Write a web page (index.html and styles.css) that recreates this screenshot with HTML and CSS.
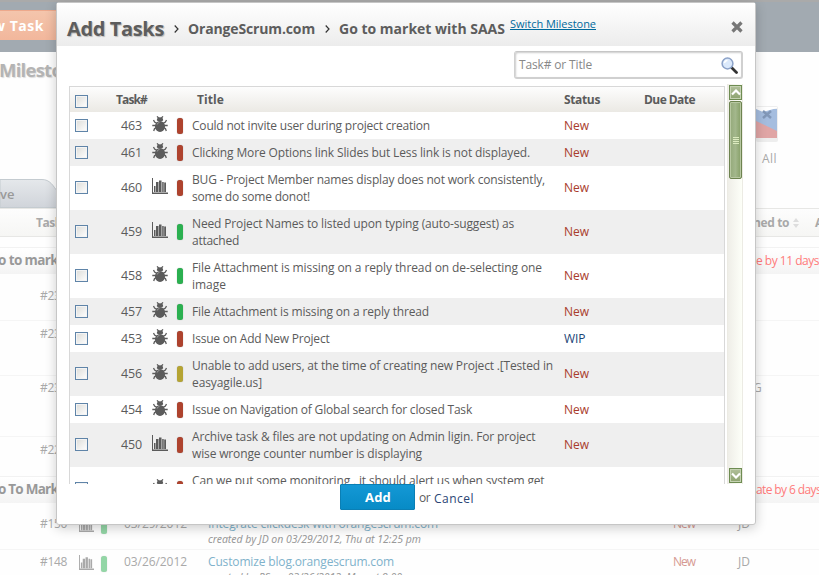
FILE: index.html
```html
<!DOCTYPE html>
<html lang="en">
<head>
<meta charset="utf-8">
<title>Add Tasks</title>
<link rel="stylesheet" href="styles.css">
</head>
<body>
<svg class="defs" width="0" height="0">
  <symbol id="bug" viewBox="0 0 16 16">
    <path d="M4.800 4.300C4.900 2 6.200 1.300 8 1.300s3.100.7 3.200 3L10 5.200H6z"/>
    <path d="M5 .4 6.800 2.200M11 .4 9.200 2.200M1.500 4 2.600 6 5 7.500M14.500 4l-1.100 2L11 7.500M.3 9.500H4M15.700 9.500H12M1.700 15 2.500 12.700 5 11M14.300 15 13.500 12.700 11 11" fill="none" stroke="currentColor" stroke-width="1.300"/>
    <ellipse cx="8" cy="10.400" rx="5" ry="5.500"/>
    <path d="M5.200 8.500c.4-1.400 1.400-2 2.200-2" fill="none" stroke="#bbb" stroke-width=".7"/>
  </symbol>
  <symbol id="chart" viewBox="0 0 16 16">
    <path d="M0 0h1v14.500h15V16H0z"/>
    <path d="M2 8h1.500v6H2zM4 4h2.500v10H4zM7 2.500h2.500V14H7zM10.200 4h1.500v10h-1.500zM12.200 4.500H14V14h-1.800z"/>
  </symbol>
</svg>

<div class="page">
  <div class="nav"><span class="new-task"><span data-w="51">w Task</span></span></div>
  <div class="hero">
    <h1>Milestones</h1>
    <div class="avatar-box">
      <svg width="22" height="36" viewBox="0 0 22 36"><rect width="22" height="36" rx="2" fill="#eee"/><path d="M0 3h21v29H0z" fill="#a5bddf"/><path d="M0 1h21v1L7 6 0 3z" fill="#fff"/><path d="M0 15l21 10v7H0z" fill="#e0a5a5"/><path d="M7 5l8 7M15 5l-8 7" stroke="#8298b8" stroke-width="2.500"/></svg>
      <span class="all" data-w="15">All</span>
    </div>
  </div>
  <div class="tabs">
    <svg width="70" height="29" viewBox="0 0 70 29"><defs><linearGradient id="tg" x2="0" y2="1"><stop stop-color="#e5e8eb"/><stop offset="1" stop-color="#d0d4da"/></linearGradient></defs><path d="M0 .5h42c8 0 11 6 16 13s7 12 12 15H0z" fill="url(#tg)" stroke="#c4cbd0"/></svg>
    <span class="tab-name">ve</span>
  </div>
  <div class="cols"><span class="c-task">Task#</span><span class="c-assign">Assigned to</span><svg class="sort" width="6" height="10" viewBox="0 0 6 10"><path d="M3 0l3 4H0zM3 10L0 6h6z" fill="#ddd"/></svg><span>Activity</span></div>
  <div class="group g1"><b data-w="60">o to mark</b><span class="late" data-w="63">e by 11 days</span></div>
  <div class="bgrow r1"><span class="num" data-w="27">#233</span></div>
  <div class="bgrow r2"><span class="num" data-w="27">#231</span></div>
  <div class="bgrow r3"><span class="num" data-w="27">#230</span><span class="who who-g">G</span></div>
  <div class="bgrow r4"><span class="num" data-w="27">#221</span></div>
  <div class="group g2"><b data-w="60">o To Mark</b><span class="late" data-w="65">ate by 6 days</span></div>
  <div class="bgrow r5">
    <span class="num" data-w="27">#150</span><svg class="ic" width="15" height="15"><use href="#chart"/></svg><i class="pill green"></i><span class="date" data-w="63">03/29/2012</span>
    <div class="info"><a data-w="230">Integrate clickdesk with orangescrum.com</a><em data-w="213">created by JD on 03/29/2012, Thu at 12:25 pm</em></div>
    <span class="st" data-w="22">New</span><span class="who">JD</span>
  </div>
  <div class="bgrow r6">
    <span class="num" data-w="27">#148</span><svg class="ic" width="15" height="15"><use href="#chart"/></svg><i class="pill green"></i><span class="date" data-w="63">03/26/2012</span>
    <div class="info"><a data-w="186">Customize blog.orangescrum.com</a><em data-w="194">created by PS on 03/26/2012, Mon at 9:00</em></div>
    <span class="st" data-w="22">New</span><span class="who">JD</span>
  </div>
</div>

<div class="modal">
  <div class="head">
    <span class="t" data-w="97">Add Tasks</span>
    <svg class="chev" width="5" height="8" viewBox="0 0 5 8"><path d="M.7.5 4 4 .7 7.500" fill="none" stroke="#333" stroke-width="1.200"/></svg>
    <span class="crumb c1" data-w="127">OrangeScrum.com</span>
    <svg class="chev" width="5" height="8" viewBox="0 0 5 8"><path d="M.7.5 4 4 .7 7.500" fill="none" stroke="#333" stroke-width="1.200"/></svg>
    <span class="crumb c2" data-w="166">Go to market with SAAS</span>
    <a class="switch" data-w="86">Switch Milestone</a>
    <svg class="close" width="12" height="12" viewBox="0 0 12 12"><path d="M1.500 1.500l9 9M10.500 1.500l-9 9" stroke="#777" stroke-width="3.200"/></svg>
  </div>
  <div class="search"><span data-w="73">Task# or Title</span>
    <svg width="17" height="17" viewBox="0 0 17 17"><path d="M10.500 10.500l5 5" stroke="#333" stroke-width="2.800" stroke-linecap="round"/><circle cx="6.500" cy="6.500" r="5.400" fill="#dbe9fb" stroke="#8ca2c8" stroke-width="1.500"/><path d="M3.500 6a3 3 0 013-2.500" stroke="#fff" stroke-width="1.500" fill="none"/></svg>
  </div>
  <div class="scroller">
    <div class="table">
      <div class="row thead"><i class="cb"></i><b class="h-task" data-w="31">Task#</b><b class="h-title" data-w="27">Title</b><b class="h-status" data-w="36">Status</b><b class="h-due" data-w="51">Due Date</b></div>
      <div class="row"><i class="cb"></i><span class="n" data-w="21">463</span><svg class="ic"><use href="#bug"/></svg><i class="pill red"></i><div class="ti"><span data-w="238">Could not invite user during project creation</span></div><span class="s" data-w="25">New</span></div>
      <div class="row"><i class="cb"></i><span class="n" data-w="21">461</span><svg class="ic"><use href="#bug"/></svg><i class="pill red"></i><div class="ti"><span data-w="338">Clicking More Options link Slides but Less link is not displayed.</span></div><span class="s" data-w="25">New</span></div>
      <div class="row"><i class="cb"></i><span class="n" data-w="21">460</span><svg class="ic"><use href="#chart"/></svg><i class="pill red"></i><div class="ti"><span data-w="353">BUG - Project Member names display does not work consistently,</span><span data-w="118">some do some donot!</span></div><span class="s" data-w="25">New</span></div>
      <div class="row"><i class="cb"></i><span class="n" data-w="21">459</span><svg class="ic"><use href="#chart"/></svg><i class="pill green"></i><div class="ti"><span data-w="322">Need Project Names to listed upon typing (auto-suggest) as</span><span data-w="47">attached</span></div><span class="s" data-w="25">New</span></div>
      <div class="row"><i class="cb"></i><span class="n" data-w="21">458</span><svg class="ic"><use href="#bug"/></svg><i class="pill green"></i><div class="ti"><span data-w="350">File Attachment is missing on a reply thread on de-selecting one</span><span data-w="34">image</span></div><span class="s" data-w="25">New</span></div>
      <div class="row"><i class="cb"></i><span class="n" data-w="21">457</span><svg class="ic"><use href="#bug"/></svg><i class="pill green"></i><div class="ti"><span data-w="237">File Attachment is missing on a reply thread</span></div><span class="s" data-w="25">New</span></div>
      <div class="row"><i class="cb"></i><span class="n" data-w="21">453</span><svg class="ic"><use href="#bug"/></svg><i class="pill red"></i><div class="ti"><span data-w="137.5">Issue on Add New Project</span></div><span class="s wip" data-w="21.5">WIP</span></div>
      <div class="row"><i class="cb"></i><span class="n" data-w="21">456</span><svg class="ic"><use href="#bug"/></svg><i class="pill olive"></i><div class="ti"><span data-w="361">Unable to add users, at the time of creating new Project .[Tested in</span><span data-w="70">easyagile.us]</span></div><span class="s" data-w="25">New</span></div>
      <div class="row"><i class="cb"></i><span class="n" data-w="21">454</span><svg class="ic"><use href="#bug"/></svg><i class="pill red"></i><div class="ti"><span data-w="280">Issue on Navigation of Global search for closed Task</span></div><span class="s" data-w="25">New</span></div>
      <div class="row"><i class="cb"></i><span class="n" data-w="21">450</span><svg class="ic"><use href="#chart"/></svg><i class="pill red"></i><div class="ti"><span data-w="343.5">Archive task &amp; files are not updating on Admin ligin. For project</span><span data-w="230">wise wronge counter number is displaying</span></div><span class="s" data-w="25">New</span></div>
      <div class="row"><i class="cb"></i><span class="n"></span><svg class="ic"><use href="#bug"/></svg><i class="pill red"></i><div class="ti"><span data-w="352.5">Can we put some monitoring , it should alert us when system get</span><span>&nbsp;</span></div></div>
    </div>
    <div class="bar">
      <div class="btn"><svg width="10" height="7" viewBox="0 0 10 7"><path d="M1 5.500l4-4 4 4" fill="none" stroke="#fff" stroke-width="2.200"/></svg></div>
      <div class="thumb"><i></i><i></i><i></i><i></i></div>
      <div class="btn down"><svg width="10" height="7" viewBox="0 0 10 7"><path d="M1 1.500l4 4 4-4" fill="none" stroke="#fff" stroke-width="2.200"/></svg></div>
    </div>
  </div>
  <div class="foot"><span class="add"><b data-w="26">Add</b></span><span class="or" data-w="11">or</span><a class="cancel" data-w="40">Cancel</a></div>
</div>
<script src="fit.js"></script>
</body>
</html>
```
FILE: styles.css
```css
* { box-sizing: border-box; }
body { margin: 0; width: 819px; height: 575px; overflow: hidden; background: #fff; font: 12px/17px "Open Sans", "Noto Sans", sans-serif; color: #5b5b5b; position: relative; }
[data-w] { white-space: nowrap; }
.defs { position: absolute; }

/* faded page behind the dialog */
.page { height: 575px; overflow: hidden; background: #fefefe; color: #a9a9a9; }
.nav { height: 52px; background: #a2aab1; border-top: 2px solid #aaa; padding-top: 8px; }
.new-task { display: block; width: 60px; height: 30px; background: linear-gradient(#f4c5ac, #f2b79c); border-top: 1px solid #eda98c; color: #fff; font-weight: 700; font-size: 14px; line-height: 29px; padding-left: 0; text-indent: -7px; }
.hero { height: 127px; display: flex; justify-content: space-between; }
h1 { margin: 4px 0 0 -1px; font-size: 18.5px; line-height: 28px; letter-spacing: -.75px; color: #b4b4b4; text-shadow: 1px 1px 1px #ddd; }
.avatar-box { width: 63px; padding-top: 54px; display: flex; flex-direction: column; }
.all { margin: 8px 0 0 6px; align-self: flex-start; }
.tabs { height: 29px; display: flex; }
.tab-name { margin: 7px 0 0 -70px; font-size: 13px; color: #999; font-weight: 600; }
.cols { height: 29px; display: flex; align-items: center; border: solid #e7e7e5; border-width: 1px 0; background: linear-gradient(#fdfdfd, #f6f6f4); font-weight: 700; white-space: nowrap; overflow: hidden; }
.cols > * { flex: none; }
.c-task { width: 717px; padding-left: 36px; letter-spacing: -.5px; }
.c-assign { width: 72px; text-align: right; letter-spacing: -.4px; }
.sort { margin: 0 16px 0 4px; }
.group { height: 27px; display: flex; align-items: center; justify-content: space-between; background: linear-gradient(#fff, #f4f4f4); border-top: 1px solid #f2f2f2; padding-bottom: 2px; }
.group b { font-size: 13.5px; color: #999; margin-left: -2px; }
.late { width: 63px; color: #ff7b7b; }
.g1 { margin-top: 10px; }
.bgrow { display: flex; align-items: flex-start; border-top: 1px solid #f5f5f5; padding-top: 4px; }
.r1 { height: 46px; border: 0; padding-top: 13px; }
.r2 { height: 55px; }
.r3 { height: 61px; }
.r4 { height: 40px; }
.r5 { height: 46px; border: 0; padding-top: 12px; }
.r6 { height: 46px; padding-top: 3px; }
.r3 .num, .r3 .who { margin-top: -1px; }
.num { width: 39px; margin-left: 40px; flex: none; }
.bgrow .ic { flex: none; width: 15px; height: 15px; margin: 2px 7px 0 0; }
.bgrow .pill { opacity: .5; margin: 3px 17px 0 0; }
.date { width: 84px; flex: none; }
.info { width: 465px; flex: none; }
.info a, .info em { display: block; }
.info a { color: #7fb2cb; font-size: 12px; }
.info em { font-family: "Noto Sans", sans-serif; font-style: italic; font-size: 10.5px; line-height: 13px; color: #999; margin-top: 1px; }
.st { width: 65px; color: #d69a92; }
.who-g { margin-left: 674px; }

/* dialog */
.modal { position: absolute; left: 56px; top: 2px; width: 700px; height: 523px; background: #fff; border: 1px solid #c6c6c6; border-radius: 3px; box-shadow: 0 3px 12px rgba(0,0,0,.2); }
.head { height: 43px; display: flex; align-items: center; background: linear-gradient(#fff, #ececec); padding-left: 10px; padding-top: 8px; font-weight: 700; color: #5d5d5d; }
.t { font-size: 20px; line-height: 26px; width: 107px; text-shadow: 1px 1px 1px #bbb; }
.chev { margin-right: 9px; }
.crumb { font-size: 14px; }
.c1 { width: 136px; margin-right: 1px; }
.c2 { width: 171px; }
.switch { width: 86px; font-weight: 400; font-size: 11px; line-height: 14px; margin-top: -9px; color: #00699c; text-decoration: underline; }
.close { margin: -4px 0 0 135px; }
.search { margin: 5px 0 0 457px; width: 229px; height: 28px; border: 2px solid #ccc; border-color: #c6c6c6 #d0d0d0 #d0d0d0; border-width: 1px 2px 2px 1px; border-radius: 3px; display: flex; align-items: center; justify-content: space-between; padding: 0 3px 0 4px; color: #888; box-shadow: inset 1px 1px 2px #ccc; }
.search svg { margin-top: 2px; }
.scroller { margin: 5px 0 0 12px; height: 400px; display: flex; overflow: hidden; }
.table { width: 656px; margin-top: 2px; border: 1px solid #d8d8d8; height: 600px; }
.row { display: flex; align-items: center; padding: 5px 0 5px 5px; }
.row:nth-child(odd) { background: #efefef; }
.row.thead { height: 25px; background: linear-gradient(#fdfdfd, #ebe9e4); padding: 0 0 0 5px; }
.cb { width: 13px; height: 13px; margin-bottom: 1px; flex: none; border: 1px solid #5f84a8; background: linear-gradient(135deg, #dcdcd8, #fff); box-shadow: inset 0 0 0 1px #f4f4f4; }
.thead .cb { margin: 4px 0 0; }
.h-task { margin-left: 28px; width: 81px; }
.h-title { width: 367px; }
.h-status { width: 80px; }
.n { margin: -1px 0 0 33px; width: 31px; flex: none; font-size: 12.5px; }
.ic { width: 16px; height: 16px; fill: currentColor; flex: none; }
.row .ic { margin: -4px 9px 0 0; }
.row .ti { width: 372px; margin-left: 9px; flex: none; }
.pill { width: 6px; height: 16px; border-radius: 2.5px; flex: none; box-shadow: 0 0 1px #999; }
.red { background: #ae432e; }
.green { background: #2bb050; }
.olive { background: #b5a433; }
.ti span { display: block; }
.s { color: #a93c2c; margin-top: -1px; }
.wip { color: #1b4475; }
.bar { width: 16px; margin-left: 2px; height: 400px; display: flex; flex-direction: column; background: linear-gradient(90deg, #efeee8, #fdfff8); border: solid #ecebe4; border-width: 0 1px; }
.btn { height: 15px; margin: 1px 0 1px 1px; border: 1px solid #6e8c52; background: linear-gradient(#b1c09b, #8da36f); display: flex; align-items: center; justify-content: center; box-shadow: inset 0 0 0 1px #c5d2b2; }
.thumb { height: 78px; margin-left: 1px; border: 1px solid #6d8350; border-radius: 2px; background: linear-gradient(90deg, #94a97a, #a3b78c 50%, #869f67); box-shadow: inset 0 0 0 1px #b8c8a2; display: flex; flex-direction: column; align-items: center; justify-content: center; gap: 1px; }
.thumb i { width: 6px; height: 1px; background: #dcebbf; }
.down { margin-top: auto; }
.foot { display: flex; padding-left: 283px; }
.add { width: 75px; height: 26px; background: linear-gradient(#1498d5, #078bc6); border: 1px solid #0a7fb5; border-radius: 1px; color: #fff; font-size: 13px; line-height: 24px; padding-left: 24px; margin-right: 4px; }
.or { width: 15px; margin-top: 5px; }
.cancel { color: #2a4575; margin-top: 6px; }
```
FILE: fit.js
```javascript
document.querySelectorAll('[data-w]').forEach(function (el) {
  var range = document.createRange();
  range.selectNodeContents(el);
  el.style.letterSpacing = '0px';
  var natural = range.getBoundingClientRect().width;
  el.style.letterSpacing = (parseFloat(el.dataset.w) - natural) / el.textContent.length + 'px';
});
```
